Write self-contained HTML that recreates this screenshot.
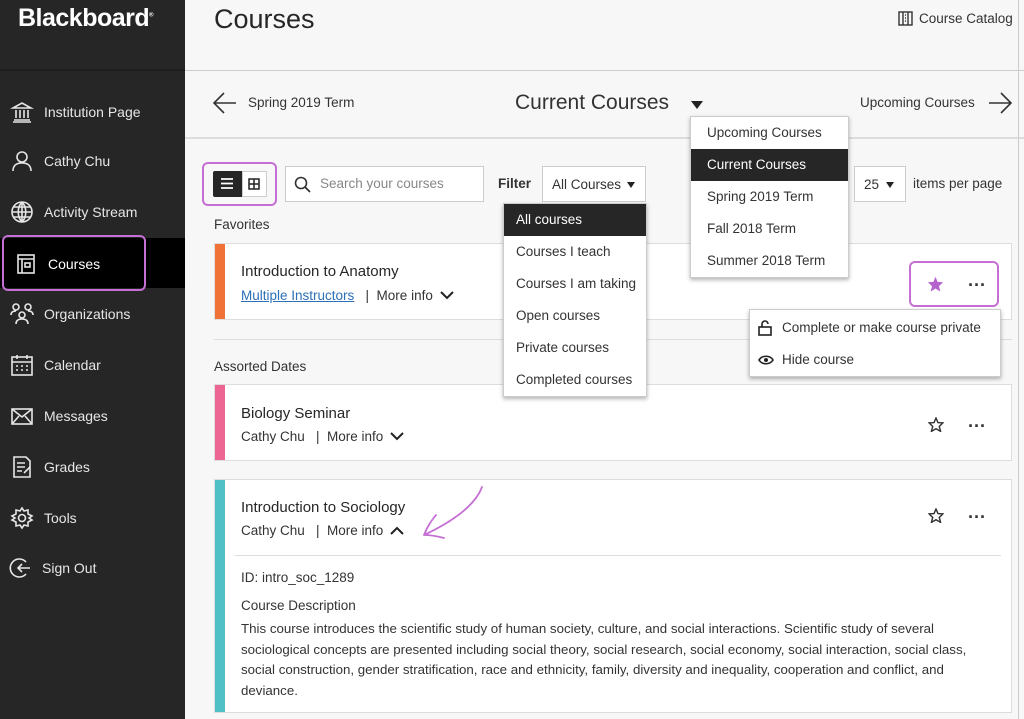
<!DOCTYPE html>
<html><head><meta charset="utf-8"><style>
*{box-sizing:border-box;margin:0;padding:0}
body{width:1024px;height:719px;overflow:hidden;background:#f7f7f7;font-family:"Liberation Sans",sans-serif;color:#262626;position:relative}
.a{position:absolute;white-space:nowrap}
#side{position:absolute;left:0;top:0;width:185px;height:719px;background:#262626;color:#e6e6e6}
.nav{position:absolute;left:10px;font-size:14px;display:flex;align-items:center}
.nav svg{width:24px;height:24px;margin-right:10px;stroke:#e6e6e6;fill:none;stroke-width:1.6}
.card{position:absolute;left:214px;right:12px;background:#fff;border:1px solid #ddd}
.bar{position:absolute;left:0;top:0;bottom:0;width:10px}
.menu{position:absolute;background:#fff;border:1px solid #ccc;box-shadow:0 2px 4px rgba(0,0,0,.3);font-size:13.5px}
.menu div{height:32px;line-height:32px;padding-left:12px;color:#333}
.menu .sel{background:#262626;color:#fff}
.t{font-size:15px;color:#262626}
.s{font-size:13.5px;color:#333}
.dots{font-size:18px;font-weight:bold;letter-spacing:0px;color:#333}
</style></head><body>
<div id="side">
  <div class="a" style="left:18px;top:4px;font-size:25px;font-weight:bold;color:#fff;letter-spacing:-0.5px">Blackboard<sup style="font-size:6px">®</sup></div>
  <div style="position:absolute;left:0;top:69px;width:185px;height:2px;background:#1e1e1e"></div>
  <div class="nav" style="top:100px"><svg viewBox="0 0 24 24"><path d="M3 8L12 3L21 8H3ZM4 20H20M3 22H21M6 10V18M10 10V18M14 10V18M18 10V18"/></svg>Institution Page</div>
  <div class="nav" style="top:149px"><svg viewBox="0 0 24 24"><circle cx="12" cy="8" r="5"/><path d="M3 22C3 16 7 14 12 14S21 16 21 22"/></svg>Cathy Chu</div>
  <div class="nav" style="top:200px"><svg viewBox="0 0 24 24"><circle cx="12" cy="12" r="10"/><path d="M2 12H22M12 2V22M4 7H20M4 17H20M12 2C7 7 7 17 12 22M12 2C17 7 17 17 12 22"/></svg>Activity Stream</div>
  <div style="position:absolute;left:0;top:238px;width:185px;height:50px;background:#000"></div>
  <div style="position:absolute;left:2px;top:235px;width:144px;height:56px;border:2px solid #c56fd4;border-radius:6px"></div>
  <div class="nav" style="top:252px;left:14px;color:#fff"><svg viewBox="0 0 24 24"><rect x="4" y="3" width="16" height="18"/><path d="M4 7H20M8 7V21"/><rect x="11" y="11" width="5" height="4"/></svg>Courses</div>
  <div class="nav" style="top:302px"><svg viewBox="0 0 24 24"><circle cx="6" cy="5" r="3"/><circle cx="18" cy="5" r="3"/><circle cx="12" cy="13" r="3"/><path d="M1 13C1 10 3 9 6 9M23 13C23 10 21 9 18 9M6 22C6 18 9 17 12 17S18 18 18 22"/></svg>Organizations</div>
  <div class="nav" style="top:353px"><svg viewBox="0 0 24 24"><rect x="2" y="4" width="20" height="18"/><path d="M2 9H22M7 2V6M17 2V6M6 13H8M11 13H13M16 13H18M6 17H8M11 17H13M16 17H18"/></svg>Calendar</div>
  <div class="nav" style="top:404px"><svg viewBox="0 0 24 24"><rect x="2" y="5" width="20" height="15"/><path d="M2 5L12 13L22 5M2 20L9 12M22 20L15 12"/></svg>Messages</div>
  <div class="nav" style="top:455px"><svg viewBox="0 0 24 24"><path d="M4 2H16L20 6V22H4Z"/><path d="M7 8H15M7 12H15M7 16H12M14 18L20 12"/></svg>Grades</div>
  <div class="nav" style="top:506px"><svg viewBox="0 0 24 24"><circle cx="12" cy="12" r="3.5"/><path d="M12 2L14 5L18 4L18 8L22 10L19 12L22 14L18 16L18 20L14 19L12 22L10 19L6 20L6 16L2 14L5 12L2 10L6 8L6 4L10 5Z"/></svg>Tools</div>
  <div class="nav" style="top:556px;left:8px"><svg viewBox="0 0 24 24"><path d="M6 6A9 9 0 1 1 6 18M2 12H14M10 8L14 12L10 16" transform="scale(-1,1) translate(-24,0)"/></svg>Sign Out</div>
</div>

<div class="a" style="left:214px;top:4px;font-size:27px;color:#262626;font-family:'Liberation Sans',sans-serif">Courses</div>
<div class="a" style="left:898px;top:11px;font-size:13.5px;color:#333;display:flex;align-items:center"><svg width="15" height="15" viewBox="0 0 15 15" style="margin-right:6px"><rect x="1" y="1" width="13" height="13" fill="none" stroke="#333" stroke-width="1.4"/><path d="M5 1V14M10 1V14M7 4h1M7 7h1M7 10h1" stroke="#333" stroke-width="1.4"/></svg>Course Catalog</div>
<div style="position:absolute;left:185px;top:70px;right:0;height:1px;background:#ccc"></div>
<div style="position:absolute;left:185px;top:137px;right:0;height:2px;background:#ddd"></div>
<div style="position:absolute;left:1018px;top:0;width:1px;height:719px;background:#ccc"></div>

<svg class="a" style="left:212px;top:91px" width="26" height="24" viewBox="0 0 26 24"><path d="M24 12H2M12 2L2 12L12 22" fill="none" stroke="#333" stroke-width="1.6"/></svg>
<div class="a s" style="left:248px;top:95px">Spring 2019 Term</div>
<div class="a" style="left:515px;top:91px;font-size:21px;color:#333">Current Courses</div>
<svg class="a" style="left:691px;top:101px" width="12" height="8"><path d="M0 0H12L6 8Z" fill="#222"/></svg>
<div class="a s" style="left:860px;top:95px">Upcoming Courses</div>
<svg class="a" style="left:987px;top:91px" width="26" height="24" viewBox="0 0 26 24"><path d="M2 12H24M14 2L24 12L14 22" fill="none" stroke="#333" stroke-width="1.6"/></svg>

<div style="position:absolute;left:202px;top:162px;width:75px;height:44px;border:2px solid #c56fd4;border-radius:6px"></div>
<div style="position:absolute;left:213px;top:171px;width:29px;height:26px;background:#262626;border-radius:2px 0 0 2px"></div>
<div style="position:absolute;left:242px;top:171px;width:25px;height:26px;background:#fff;border:1px solid #ccc"></div>
<svg class="a" style="left:220px;top:177px" width="14" height="13"><path d="M1 2H13M1 6.5H13M1 11H13" stroke="#fff" stroke-width="1.8"/></svg>
<svg class="a" style="left:248px;top:178px" width="12" height="12"><rect x="1" y="1" width="10" height="10" fill="none" stroke="#222" stroke-width="1.5"/><path d="M6 1V11M1 6H11" stroke="#222" stroke-width="1.5"/></svg>
<div style="position:absolute;left:285px;top:166px;width:199px;height:36px;background:#fff;border:1px solid #ccc"></div>
<svg class="a" style="left:294px;top:176px" width="17" height="17"><circle cx="7" cy="7" r="5.5" fill="none" stroke="#333" stroke-width="1.6"/><path d="M11 11L16 16" stroke="#333" stroke-width="1.8"/></svg>
<div class="a" style="left:320px;top:176px;font-size:13.5px;color:#888">Search your courses</div>
<div class="a" style="left:498px;top:176px;font-size:13.5px;font-weight:bold;color:#333">Filter</div>
<div style="position:absolute;left:542px;top:166px;width:104px;height:36px;background:#fff;border:1px solid #ccc"></div>
<div class="a s" style="left:552px;top:177px">All Courses</div>
<svg class="a" style="left:627px;top:182px" width="8" height="6"><path d="M0 0H8L4 6Z" fill="#222"/></svg>
<div style="position:absolute;left:854px;top:166px;width:52px;height:36px;background:#fff;border:1px solid #ccc"></div>
<div class="a s" style="left:864px;top:177px">25</div>
<svg class="a" style="left:886px;top:182px" width="8" height="6"><path d="M0 0H8L4 6Z" fill="#222"/></svg>
<div class="a s" style="left:913px;top:176px">items per page</div>

<div class="a s" style="left:214px;top:217px">Favorites</div>
<div class="card" style="top:243px;height:77px"><div class="bar" style="background:#f07236"></div>
  <div class="a t" style="left:26px;top:19px">Introduction to Anatomy</div>
  <div class="a s" style="left:26px;top:44px"><span style="color:#2b70b8;text-decoration:underline">Multiple Instructors</span> &nbsp; | &nbsp;More info <svg width="14" height="9" style="margin-left:3px"><path d="M1 1L7 7L13 1" fill="none" stroke="#222" stroke-width="2"/></svg></div>
</div>
<div style="position:absolute;left:909px;top:261px;width:90px;height:46px;border:2px solid #c56fd4;border-radius:6px;background:#fff"></div>
<svg class="a" style="left:927px;top:276px" width="17" height="16" viewBox="0 0 24 23"><path d="M12 1L15 8.5L23 9L17 14.5L19 22.5L12 18L5 22.5L7 14.5L1 9L9 8.5Z" fill="#b463cc"/></svg>
<div class="a dots" style="left:968px;top:275px">···</div>

<div style="position:absolute;left:214px;top:339px;right:12px;height:1px;background:#ddd"></div>
<div class="a s" style="left:214px;top:359px">Assorted Dates</div>

<div class="card" style="top:384px;height:77px"><div class="bar" style="background:#ec6593"></div>
  <div class="a t" style="left:26px;top:20px">Biology Seminar</div>
  <div class="a s" style="left:26px;top:44px">Cathy Chu &nbsp; | &nbsp;More info <svg width="14" height="9" style="margin-left:3px"><path d="M1 1L7 7L13 1" fill="none" stroke="#222" stroke-width="2"/></svg></div>
</div>
<svg class="a" style="left:928px;top:417px" width="16" height="15" viewBox="0 0 24 23"><path d="M12 1.5L15 8.5L22.5 9L17 14.5L19 22L12 18L5 22L7 14.5L1.5 9L9 8.5Z" fill="none" stroke="#333" stroke-width="2.2"/></svg>
<div class="a dots" style="left:968px;top:416px">···</div>

<div class="card" style="top:479px;height:234px"><div class="bar" style="background:#4fc1c6"></div>
  <div class="a t" style="left:26px;top:19px">Introduction to Sociology</div>
  <div class="a s" style="left:26px;top:43px">Cathy Chu &nbsp; | &nbsp;More info <svg width="14" height="9" style="margin-left:3px"><path d="M1 8L7 2L13 8" fill="none" stroke="#222" stroke-width="2"/></svg></div>
  <div style="position:absolute;left:20px;right:10px;top:75px;height:1px;background:#ddd"></div>
  <div class="a s" style="left:26px;top:90px">ID: intro_soc_1289</div>
  <div class="a s" style="left:26px;top:118px">Course Description</div>
  <div class="s" style="position:absolute;left:26px;top:139px;width:760px;line-height:20.5px;font-size:13.3px">This course introduces the scientific study of human society, culture, and social interactions. Scientific study of several sociological concepts are presented including social theory, social research, social economy, social interaction, social class, social construction, gender stratification, race and ethnicity, family, diversity and inequality, cooperation and conflict, and deviance.</div>
</div>
<svg class="a" style="left:928px;top:508px" width="16" height="15" viewBox="0 0 24 23"><path d="M12 1.5L15 8.5L22.5 9L17 14.5L19 22L12 18L5 22L7 14.5L1.5 9L9 8.5Z" fill="none" stroke="#333" stroke-width="2.2"/></svg>
<div class="a dots" style="left:968px;top:507px">···</div>
<svg class="a" style="left:418px;top:485px" width="70" height="55"><path d="M64 2C58 18 40 34 6 50M6 50C10 40 14 35 18 30M6 50C15 50 22 52 26 53" fill="none" stroke="#c56fd4" stroke-width="1.8" stroke-linecap="round"/></svg>

<div class="menu" style="left:503px;top:203px;width:144px">
  <div class="sel">All courses</div><div>Courses I teach</div><div>Courses I am taking</div><div>Open courses</div><div>Private courses</div><div>Completed courses</div>
</div>
<div class="menu" style="left:690px;top:116px;width:159px">
  <div style="padding-left:16px">Upcoming Courses</div><div class="sel" style="padding-left:16px">Current Courses</div><div style="padding-left:16px">Spring 2019 Term</div><div style="padding-left:16px">Fall 2018 Term</div><div style="padding-left:16px">Summer 2018 Term</div>
</div>
<div class="menu" style="left:749px;top:309px;width:252px;height:68px">
  <div style="position:absolute;left:8px;top:2px;padding-left:0;display:flex;align-items:center"><svg width="14" height="16" style="margin-right:10px"><rect x="1" y="7" width="12" height="8" fill="none" stroke="#222" stroke-width="1.6"/><path d="M4 7V4A3 3 0 0 1 10 4" fill="none" stroke="#222" stroke-width="1.6"/></svg>Complete or make course private</div>
  <div style="position:absolute;left:8px;top:34px;padding-left:0;display:flex;align-items:center"><svg width="16" height="12" style="margin-right:8px"><path d="M1 6C4 1 12 1 15 6C12 11 4 11 1 6Z" fill="none" stroke="#222" stroke-width="1.6"/><circle cx="8" cy="6" r="2" fill="#222"/></svg>Hide course</div>
</div>
</body></html>
